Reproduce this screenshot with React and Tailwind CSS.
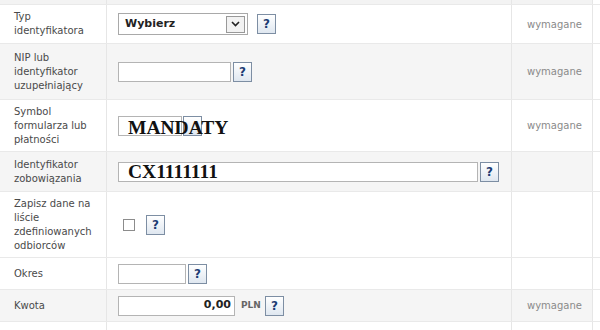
import React from "react";

const font = { fontFamily: '"DejaVu Sans", Verdana, sans-serif' };

function Help({ hidden = false }) {
  return (
    <div className="w-[19px] h-[20px] border border-[#7d8ea3] bg-gradient-to-b from-white to-[#dfe7f0] flex items-center justify-center shrink-0">
      <span className={`text-[12px] font-bold text-[#1d3c73] leading-none ${hidden ? "invisible" : ""}`}>?</span>
    </div>
  );
}

function Row({ h, bg, label, children, req }) {
  return (
    <div className={`flex ${bg} border-b border-[#e9e9e9]`} style={{ height: h }}>
      <div className="w-[107px] shrink-0 border-r border-[#e6e6e6] pl-[14px] flex items-center text-[10px] leading-[14px] text-[#4a4a4a]">
        <div>{label}</div>
      </div>
      <div className="w-[405px] shrink-0 border-r border-[#e6e6e6] pl-[11px] flex items-center relative">
        {children}
      </div>
      <div className="w-[81px] shrink-0 border-r border-[#e6e6e6] flex items-center pl-[15px] text-[10px] text-[#8a8a8a]">
        {req ? "wymagane" : ""}
      </div>
      <div className="flex-1 bg-white" />
    </div>
  );
}

const input = "h-[20px] border border-[#b4b4b4] bg-white shrink-0";
const serif = "font-['Liberation_Serif',serif] font-bold text-[19.5px] text-[#111] leading-none";

export default function App() {
  return (
    <div className="w-[600px] h-[330px] bg-white overflow-hidden" style={font}>
      <div className="flex h-[5px] border-b border-[#e9e9e9]">
        <div className="w-[107px] bg-[#f3f3f3] border-r border-[#e6e6e6]" />
        <div className="w-[405px] bg-[#f3f3f3] border-r border-[#e6e6e6]" />
        <div className="w-[81px] bg-[#f3f3f3] border-r border-[#e6e6e6]" />
        <div className="flex-1" />
      </div>

      <Row h={39} bg="bg-white" label={<>Typ<br />identyfikatora</>} req>
        <div className="flex items-center gap-[9px]">
          <div className="w-[130px] h-[22px] border border-[#a9a9a9] bg-white flex items-center justify-between pl-[6px] pr-[2px]">
            <span className="text-[11px] font-bold text-[#222]">Wybierz</span>
            <div className="w-[19px] h-[17px] border border-[#999] bg-[#f2f2f2] flex items-center justify-center">
              <svg width="9" height="6" viewBox="0 0 9 6">
                <path d="M1 1 L4.5 4.5 L8 1" fill="none" stroke="#222" strokeWidth="1.6" />
              </svg>
            </div>
          </div>
          <Help />
        </div>
      </Row>

      <Row h={56} bg="bg-[#f5f5f5]" label={<>NIP lub<br />identyfikator<br />uzupełniający</>} req>
        <div className="flex items-center gap-[2px]">
          <div className={`${input} w-[113px]`} />
          <Help />
        </div>
      </Row>

      <Row h={52} bg="bg-white" label={<>Symbol<br />formularza lub<br />płatności</>} req>
        <div className="flex items-center gap-[1px] relative">
          <div className={`${input} w-[64px]`} />
          <Help hidden />
          <span className={`absolute left-[10px] top-[2px] ${serif}`}>MANDATY</span>
        </div>
      </Row>

      <Row h={40} bg="bg-[#f5f5f5]" label={<>Identyfikator<br />zobowiązania</>}>
        <div className="flex items-center gap-[2px]">
          <div className={`${input} w-[360px] flex items-center pl-[9px] pt-[1px] overflow-visible`}>
            <span className={serif}>CX1111111</span>
          </div>
          <Help />
        </div>
      </Row>

      <Row h={66} bg="bg-white" label={<>Zapisz dane na<br />liście<br />zdefiniowanych<br />odbiorców</>}>
        <div className="flex items-center gap-[11px] pl-[5px]">
          <div className="w-[12px] h-[12px] border border-[#8c8c8c] bg-white" />
          <Help />
        </div>
      </Row>

      <Row h={32} bg="bg-white" label="Okres">
        <div className="flex items-center gap-[2px]">
          <div className={`${input} w-[68px]`} />
          <Help />
        </div>
      </Row>

      <Row h={32} bg="bg-[#f5f5f5]" label="Kwota" req>
        <div className="flex items-center">
          <div className={`${input} w-[117px] flex items-center justify-end pr-[3px]`}>
            <span className="text-[11px] font-bold text-[#222]">0,00</span>
          </div>
          <span className="ml-[6px] mr-[4px] text-[9px] font-bold text-[#666]">PLN</span>
          <Help />
        </div>
      </Row>

      <div className="flex h-[8px]">
        <div className="w-[107px] border-r border-[#e6e6e6]" />
        <div className="w-[405px] border-r border-[#e6e6e6]" />
        <div className="w-[81px] border-r border-[#e6e6e6]" />
      </div>
    </div>
  );
}
